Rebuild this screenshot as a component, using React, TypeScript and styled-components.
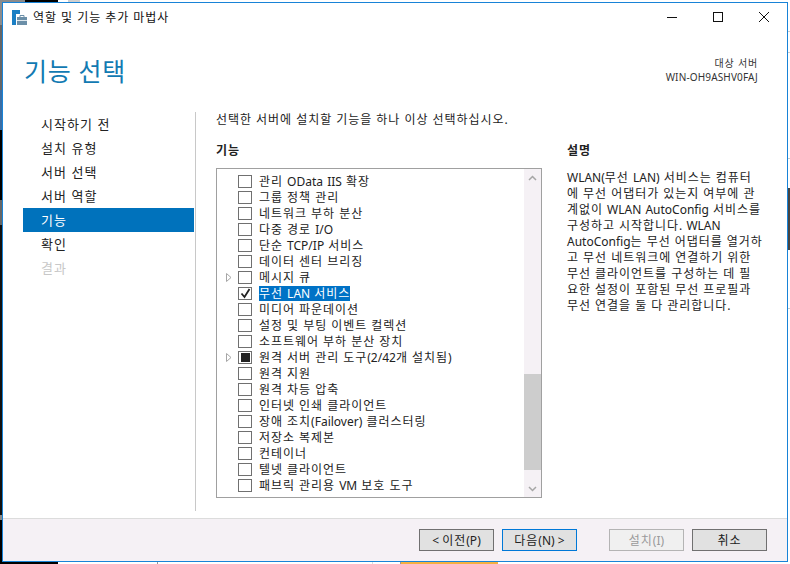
import React from "react";
import styled, { createGlobalStyle } from "styled-components";

const features = [
  { label: "관리 OData IIS 확장" },
  { label: "그룹 정책 관리" },
  { label: "네트워크 부하 분산" },
  { label: "다중 경로 I/O" },
  { label: "단순 TCP/IP 서비스" },
  { label: "데이터 센터 브리징" },
  { label: "메시지 큐", expand: true },
  { label: "무선 LAN 서비스", state: "checked", selected: true },
  { label: "미디어 파운데이션" },
  { label: "설정 및 부팅 이벤트 컬렉션" },
  { label: "소프트웨어 부하 분산 장치" },
  { label: "원격 서버 관리 도구(2/42개 설치됨)", expand: true, state: "partial" },
  { label: "원격 지원" },
  { label: "원격 차등 압축" },
  { label: "인터넷 인쇄 클라이언트" },
  { label: "장애 조치(Failover) 클러스터링" },
  { label: "저장소 복제본" },
  { label: "컨테이너" },
  { label: "텔넷 클라이언트" },
  { label: "패브릭 관리용 VM 보호 도구" },
];

const steps = ["시작하기 전", "설치 유형", "서버 선택", "서버 역할", "기능", "확인", "결과"];

const descriptionLines = [
  "WLAN(무선 LAN) 서비스는 컴퓨터",
  "에 무선 어댑터가 있는지 여부에 관",
  "계없이 WLAN AutoConfig 서비스를",
  "구성하고 시작합니다. WLAN",
  "AutoConfig는 무선 어댑터를 열거하",
  "고 무선 네트워크에 연결하기 위한",
  "무선 클라이언트를 구성하는 데 필",
  "요한 설정이 포함된 무선 프로필과",
  "무선 연결을 둘 다 관리합니다.",
];

// Malgun Gothic sets hangul wider than Noto, latin stays as is
const Ko: React.FC<{ text: string }> = ({ text }) => (
  <>
    {text.split(/([가-힣 ]+)/).map((part, i) =>
      i % 2 === 1 ? <HangulRun key={i}>{part}</HangulRun> : part
    )}
  </>
);

const App: React.FC = () => {
  return (
    <Desktop>
      <GlobalStyle />
      <Wizard>
        <TitleBar>
          <svg width="15" height="15" viewBox="0 0 15 15">
            <path d="M0 0h8v4H4v11H0z" fill="#1b7fc4" />
            <path d="M5 7h10v8H5z" fill="#6b8fa8" />
            <path d="M8 7V5.5h4V7" fill="none" stroke="#6b8fa8" />
            <path d="M5 10.5h10" stroke="#dfe8ee" />
          </svg>
          <WindowTitle>
            <Ko text="역할 및 기능 추가 마법사" />
          </WindowTitle>
          <WindowButton>
            <svg width="10" height="10" viewBox="0 0 10 10">
              <path d="M0 5.5h10" stroke="#111" />
            </svg>
          </WindowButton>
          <WindowButton>
            <svg width="10" height="10" viewBox="0 0 10 10">
              <rect x="0.5" y="0.5" width="9" height="9" fill="none" stroke="#111" />
            </svg>
          </WindowButton>
          <WindowButton>
            <svg width="10" height="10" viewBox="0 0 10 10">
              <path d="M0 0l10 10M10 0L0 10" stroke="#111" />
            </svg>
          </WindowButton>
        </TitleBar>
        <Header>
          <PageTitle>기능 선택</PageTitle>
          <ServerInfo>
            <div>
              <Ko text="대상 서버" />
            </div>
            <ServerName>WIN-OH9ASHV0FAJ</ServerName>
          </ServerInfo>
        </Header>
        <Body>
          <Sidebar>
            {steps.map((step, i) => (
              <Step key={step} $active={i === 4} $disabled={i === 6}>
                <Ko text={step} />
              </Step>
            ))}
          </Sidebar>
          <Main>
            <Intro>
              <Ko text="선택한 서버에 설치할 기능을 하나 이상 선택하십시오." />
            </Intro>
            <Columns>
              <div>
                <SectionTitle>
                  <Ko text="기능" />
                </SectionTitle>
                <ListBox>
                  <Rows>
                    {features.map((f) => (
                      <Row key={f.label}>
                        <Expander>
                          {f.expand && (
                            <svg width="6" height="9" viewBox="0 0 6 9">
                              <path d="M0.5 0.5l4.5 4-4.5 4z" fill="#fff" stroke="#a6a6a6" />
                            </svg>
                          )}
                        </Expander>
                        <CheckBox>
                          {f.state === "checked" && (
                            <svg width="11" height="11" viewBox="0 0 11 11">
                              <path d="M1.5 5.5l3 3.5 5-8" fill="none" stroke="#222" strokeWidth="1.8" />
                            </svg>
                          )}
                          {f.state === "partial" && <PartialMark />}
                        </CheckBox>
                        <RowLabel $selected={f.selected}>
                          <Ko text={f.label} />
                        </RowLabel>
                      </Row>
                    ))}
                  </Rows>
                  <ScrollBar>
                    <ScrollArrow>
                      <svg width="9" height="6" viewBox="0 0 9 6">
                        <path d="M1 5l3.5-3.5L8 5" fill="none" stroke="#a6a6a6" strokeWidth="1.5" />
                      </svg>
                    </ScrollArrow>
                    <ScrollTrack>
                      <ScrollThumb />
                    </ScrollTrack>
                    <ScrollArrow>
                      <svg width="9" height="6" viewBox="0 0 9 6">
                        <path d="M1 1l3.5 3.5L8 1" fill="none" stroke="#a6a6a6" strokeWidth="1.5" />
                      </svg>
                    </ScrollArrow>
                  </ScrollBar>
                </ListBox>
              </div>
              <DescColumn>
                <SectionTitle>
                  <Ko text="설명" />
                </SectionTitle>
                <Description>
                  {descriptionLines.map((line) => (
                    <DescLine key={line}>
                      <Ko text={line} />
                    </DescLine>
                  ))}
                </Description>
              </DescColumn>
            </Columns>
          </Main>
        </Body>
        <Footer>
          <Button>
            &lt; <Ko text="이전" />
            (P)
          </Button>
          <Button $focused>
            <Ko text="다음" />
            (N) &gt;
          </Button>
          <Button $disabled $gap>
            <Ko text="설치" />
            (I)
          </Button>
          <Button>
            <Ko text="취소" />
          </Button>
        </Footer>
      </Wizard>
    </Desktop>
  );
};

const GlobalStyle = createGlobalStyle`
  html, body {
    margin: 0;
    padding: 0;
    background: #fff;
  }
  body {
    font-family: "Noto Sans", "Noto Sans CJK KR", "Liberation Sans", sans-serif;
    font-size: 12px;
    color: #222;
  }
`;

const HangulRun = styled.span`
  letter-spacing: 0.08em;
`;

// the bits of other windows showing round the wizard
const Desktop = styled.div`
  width: 790px;
  height: 564px;
  box-sizing: border-box;
  padding: 2px;
  overflow: hidden;
  background:
    linear-gradient(to right, #8c8c8c 0 25px, #000 25px 58px, #fff 58px 68px, #cfcfcf 68px 80px, #fff 80px) top / 100% 2px no-repeat,
    linear-gradient(to right, #000 0 58px, #fff 58px 157px, #999 157px 158px, #fff 158px 372px, #ddd 372px 373px, #fff 373px 400px, #999 400px 401px, #f5b041 401px 498px, #fff 498px) bottom / 100% 2px no-repeat,
    linear-gradient(to bottom, #8c8c8c 0 25px, #666 25px 90px, #3a6ea5 90px 130px, #000 130px 200px, #666 200px 225px, #111 225px 515px, #888 515px 520px, #000 520px) left / 2px 100% no-repeat,
    linear-gradient(to bottom, #fff 0 31px, #ccc 31px 32px, #fff 32px 52px, #ccc 52px 53px, #fff 53px 158px, #ccc 158px 159px, #fff 159px 188px, #444 188px 250px, #fff 250px 308px, #ccc 308px 309px, #fff 309px) right / 2px 100% no-repeat,
    #fff;
`;

const Wizard = styled.div`
  width: 786px;
  height: 560px;
  box-sizing: border-box;
  border: 1px solid #1883d7;
  background: #fff;
  display: flex;
  flex-direction: column;
`;

const TitleBar = styled.div`
  height: 28px;
  display: flex;
  align-items: center;
  padding-left: 9px;
  flex-shrink: 0;
`;

const WindowTitle = styled.div`
  flex: 1;
  margin-left: 6px;
  font-size: 12px;
  color: #111;
`;

const WindowButton = styled.div`
  width: 46px;
  height: 28px;
  display: flex;
  align-items: center;
  justify-content: center;
`;

const Header = styled.div`
  height: 81px;
  display: flex;
  justify-content: space-between;
  padding: 0 29px 0 21px;
  flex-shrink: 0;
`;

const PageTitle = styled.div`
  font-size: 25px;
  line-height: 34px;
  margin-top: 23px;
  color: #127ab2;
  letter-spacing: 0.7px;
`;

const ServerInfo = styled.div`
  text-align: right;
  font-size: 10px;
  line-height: 14px;
  margin-top: 25px;
  color: #333;
`;

const ServerName = styled.div`
  letter-spacing: 0.15px;
`;

const Body = styled.div`
  flex: 1;
  display: flex;
  min-height: 0;
`;

const Sidebar = styled.div`
  width: 172px;
  margin-left: 20px;
  display: flex;
  flex-direction: column;
`;

const Step = styled.div<{ $active?: boolean; $disabled?: boolean }>`
  height: 24px;
  line-height: 24px;
  margin-right: 1px;
  padding-left: 18px;
  font-size: 13px;
  background: ${(p) => (p.$active ? "#0072bc" : "transparent")};
  color: ${(p) => (p.$active ? "#fff" : p.$disabled ? "#c8c8c8" : "#222")};
`;

const Main = styled.div`
  flex: 1;
  border-left: 1px solid #c8c8c8;
  padding-left: 20px;
  margin-bottom: 7px;
`;

const Intro = styled.div`
  height: 29px;
  line-height: 16px;
  font-size: 12px;
`;

const Columns = styled.div`
  display: flex;
`;

const SectionTitle = styled.div`
  font-size: 12px;
  font-weight: 700;
  box-sizing: border-box;
  height: 27px;
  padding-top: 2px;
  line-height: 16px;
  color: #222;
`;

const ListBox = styled.div`
  width: 326px;
  height: 330px;
  box-sizing: border-box;
  border: 1px solid #a0a0a0;
  display: flex;
`;

const Rows = styled.div`
  flex: 1;
  padding-top: 4px;
  overflow: hidden;
`;

const Row = styled.div`
  height: 16px;
  display: flex;
  align-items: center;
  padding-left: 9px;
`;

const Expander = styled.div`
  width: 12px;
  display: flex;
  align-items: center;
`;

const CheckBox = styled.div`
  width: 14px;
  height: 13px;
  box-sizing: border-box;
  border: 1px solid #707070;
  background: #fff;
  display: flex;
  align-items: center;
  justify-content: center;
  flex-shrink: 0;
`;

const PartialMark = styled.div`
  width: 9px;
  height: 9px;
  background: #222;
`;

const RowLabel = styled.div<{ $selected?: boolean }>`
  margin-left: 7px;
  font-size: 12px;
  line-height: 15px;
  white-space: nowrap;
  background: ${(p) => (p.$selected ? "#0072c6" : "transparent")};
  color: ${(p) => (p.$selected ? "#fff" : "#222")};
`;

const ScrollBar = styled.div`
  width: 17px;
  background: #f5f1f5;
  display: flex;
  flex-direction: column;
  flex-shrink: 0;
`;

const ScrollArrow = styled.div`
  height: 17px;
  display: flex;
  align-items: center;
  justify-content: center;
  flex-shrink: 0;
`;

const ScrollTrack = styled.div`
  flex: 1;
  display: flex;
  flex-direction: column;
  justify-content: flex-end;
  padding-bottom: 10px;
`;

const ScrollThumb = styled.div`
  height: 96px;
  background: #cdcdcd;
`;

const DescColumn = styled.div`
  width: 200px;
  margin-left: 25px;
`;

const Description = styled.div`
  margin-top: 2px;
`;

const DescLine = styled.div`
  font-size: 12px;
  line-height: 16px;
  white-space: nowrap;
  color: #222;
`;

const Footer = styled.div`
  height: 43px;
  box-sizing: border-box;
  border-top: 1px solid #dcdcdc;
  background: #f5f1f5;
  display: flex;
  align-items: flex-start;
  justify-content: flex-end;
  gap: 8px;
  padding: 10px 20px 0 0;
  flex-shrink: 0;
`;

const Button = styled.div<{ $focused?: boolean; $disabled?: boolean; $gap?: boolean }>`
  width: 75px;
  height: 22px;
  box-sizing: border-box;
  border: 1px solid ${(p) => (p.$focused ? "#0078d7" : p.$disabled ? "#b4b4b4" : "#707070")};
  background: ${(p) => (p.$disabled ? "#f0f0f0" : "#e1e1e1")};
  color: ${(p) => (p.$disabled ? "#9a9a9a" : "#222")};
  margin-left: ${(p) => (p.$gap ? "24px" : "0")};
  font-size: 12px;
  line-height: 22px;
  text-align: center;
`;

export default App;
